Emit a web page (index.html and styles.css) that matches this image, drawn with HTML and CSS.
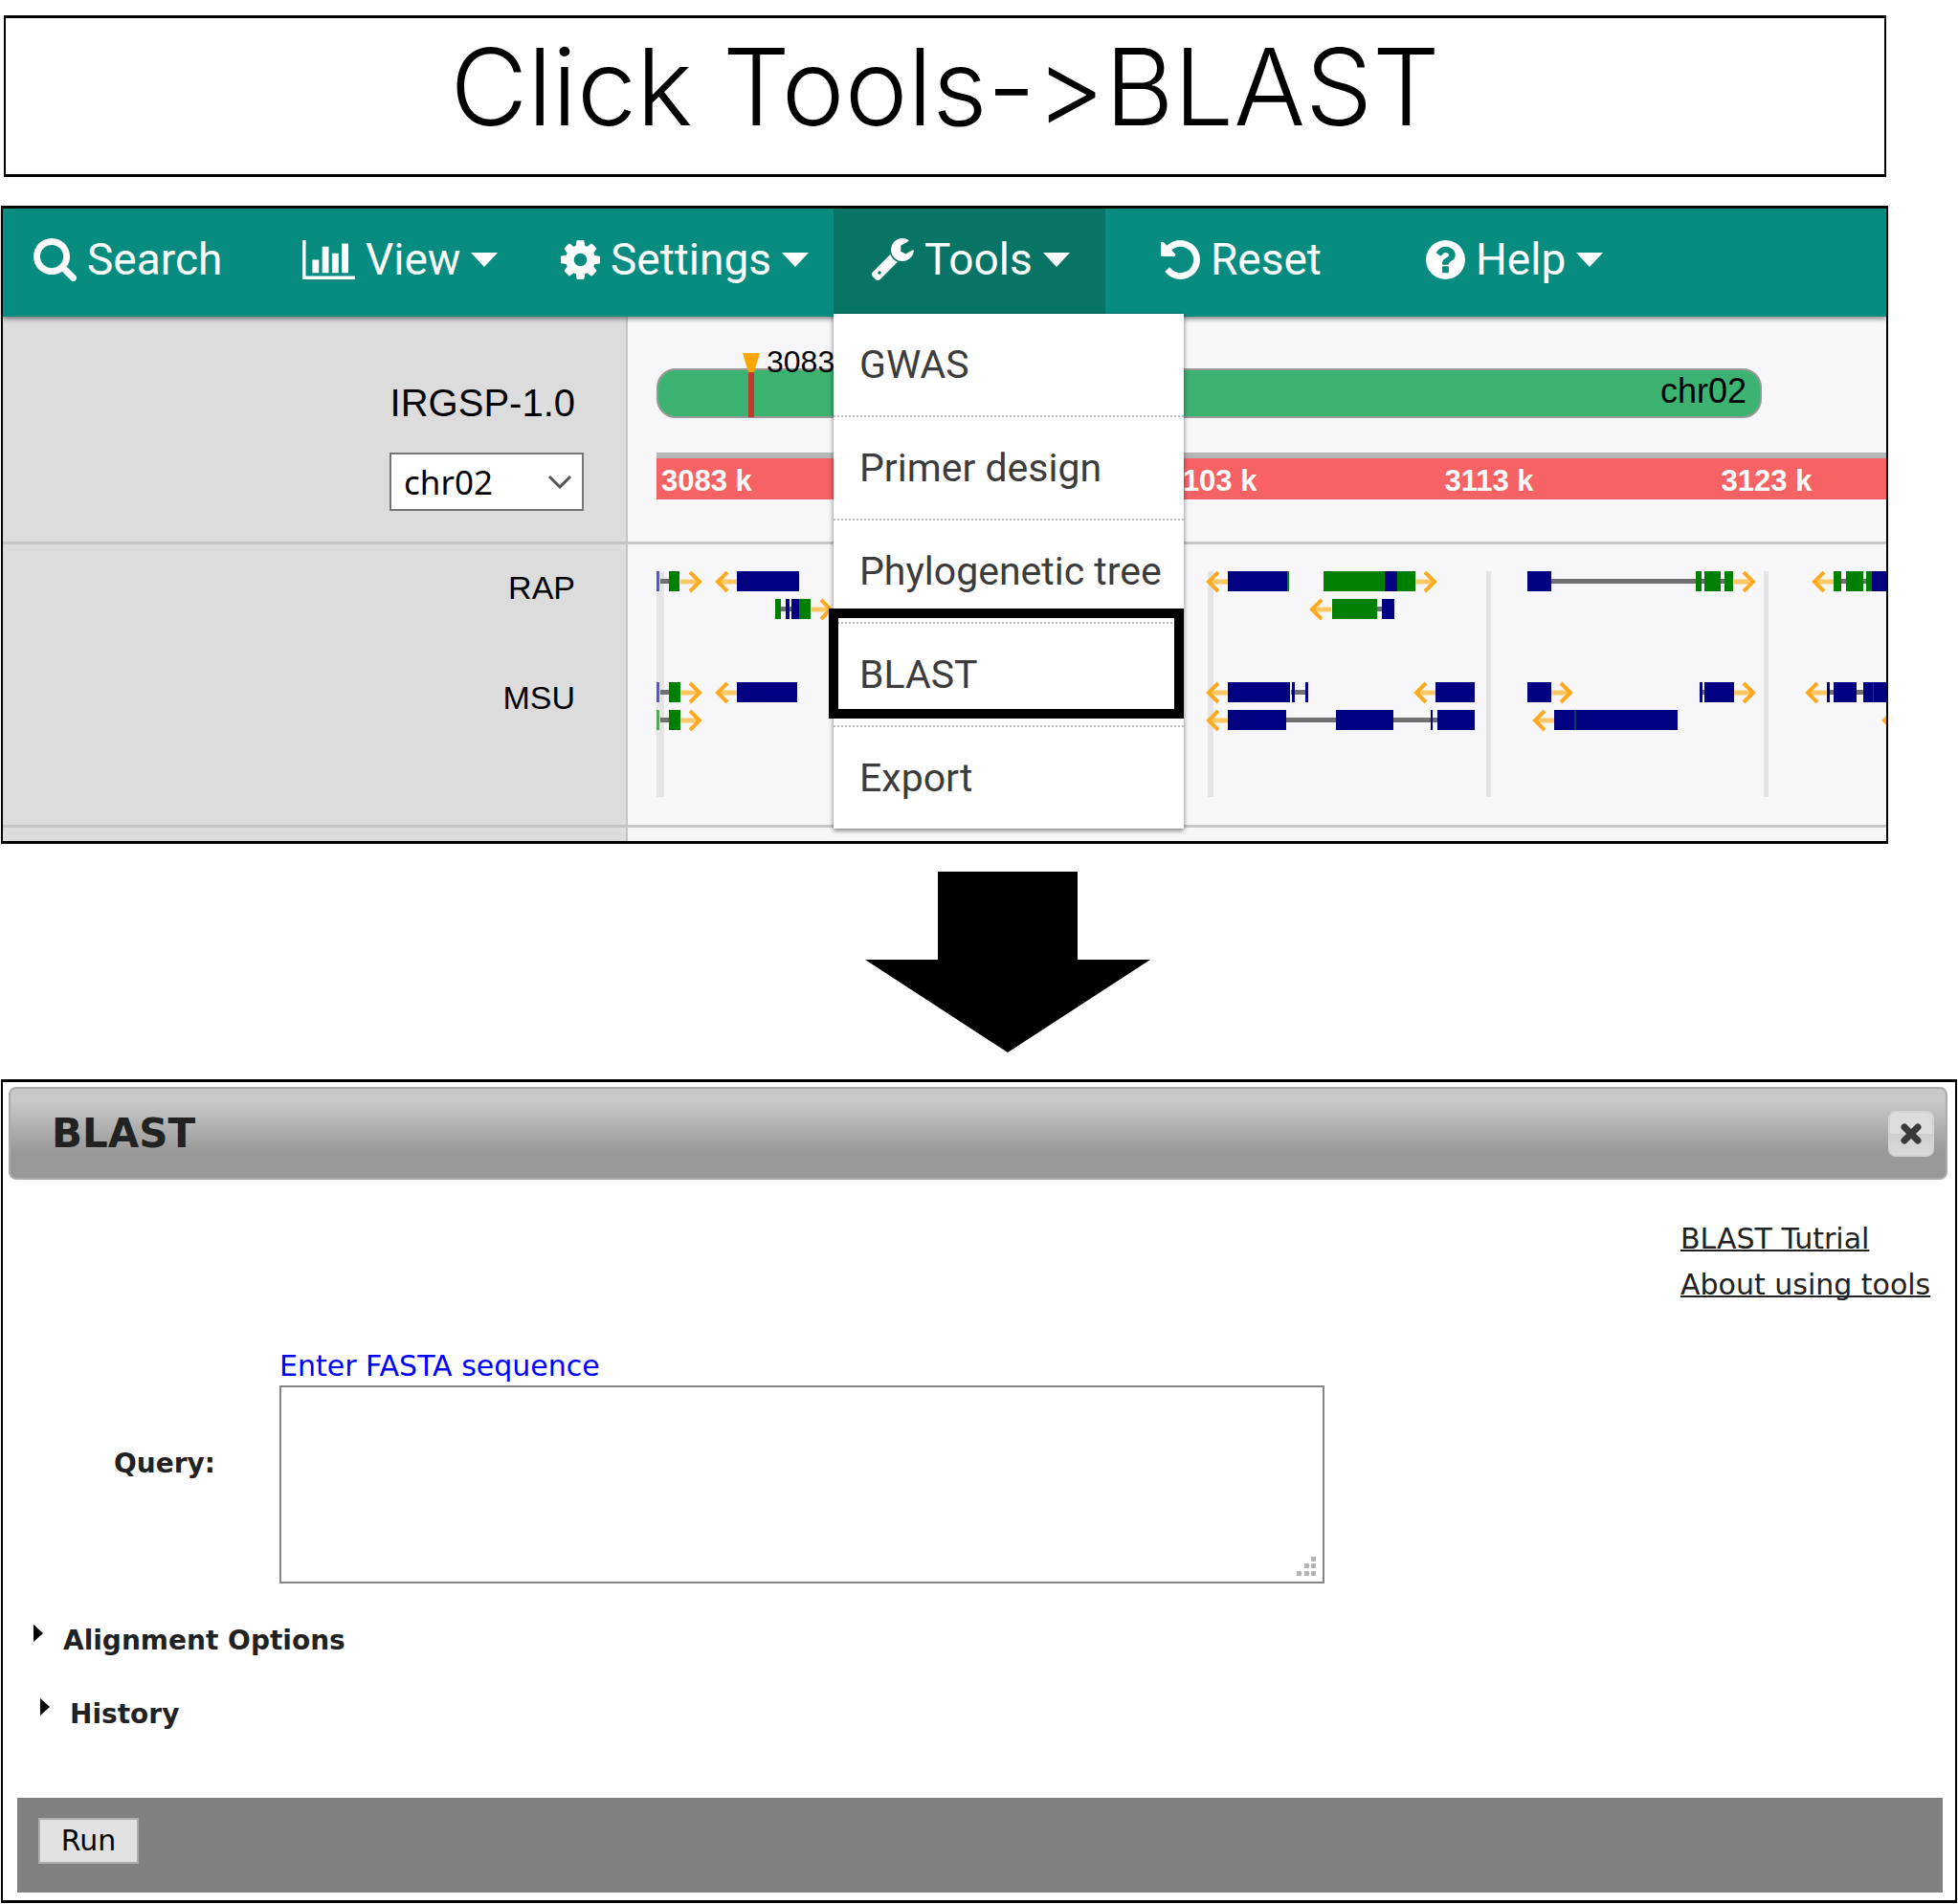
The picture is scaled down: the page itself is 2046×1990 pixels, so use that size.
FILE: index.html
```html
<!DOCTYPE html>
<html lang="en">
<head>
    <meta charset="UTF-8">
    <title>BLAST</title>
    <link rel="stylesheet" href="styles.css">
</head>
<body>

<h1 class="title">Click Tools-&gt;BLAST</h1>

<div class="browser">
    <ul class="nav">
        <li class="search">
            <button type="button">
                <svg width="45" height="45" viewBox="64 128 1664 1664"><path d="M1216 832q0-185-131.5-316.5t-316.5-131.5-316.5 131.5-131.5 316.5 131.5 316.5 316.5 131.5 316.5-131.5 131.5-316.5zm512 832q0 52-38 90t-90 38q-54 0-90-38l-343-342q-179 124-399 124-143 0-273.5-55.5t-225-150-150-225-55.5-273.5 55.5-273.5 150-225 225-150 273.5-55.5 273.5 55.5 225 150 150 225 55.5 273.5q0 220-124 399l343 343q37 37 37 90z"/></svg>
                Search
            </button>
        </li>
        <li>
            <button type="button">
                <svg width="55" height="41" viewBox="0 128 2048 1536"><path d="M640 896v512h-256v-512h256zm384-512v1024h-256v-1024h256zm1024 1152v128h-2048v-1536h128v1408h1920zm-640-896v768h-256v-768h256zm384-384v1152h-256v-1152h256z"/></svg>
                View
                <i class="caret"></i>
            </button>
        </li>
        <li>
            <button type="button">
                <svg width="41" height="41" viewBox="128 128 1536 1536"><path d="M1152 896q0-106-75-181t-181-75-181 75-75 181 75 181 181 75 181-75 75-181zm512-109v222q0 12-8 23t-20 13l-185 28q-19 54-39 91 35 50 107 138 10 12 10 25t-9 23q-27 37-99 108t-94 71q-12 0-26-9l-138-108q-44 23-91 38-16 136-29 186-7 28-36 28h-222q-14 0-24.5-8.5t-11.5-21.5l-28-184q-49-16-90-37l-141 107q-10 9-25 9-14 0-25-11-126-114-165-168-7-10-7-23 0-12 8-23 15-21 51-66.5t54-70.5q-27-50-41-99l-183-27q-13-2-21-12.5t-8-23.5v-222q0-12 8-23t19-13l186-28q14-46 39-92-40-57-107-138-10-12-10-24 0-10 9-23 26-36 98.5-107.5t94.5-71.5q13 0 26 10l138 107q44-23 91-38 16-136 29-186 7-28 36-28h222q14 0 24.5 8.5t11.5 21.5l28 184q49 16 90 37l142-107q9-9 24-9 13 0 25 10 129 119 165 170 7 8 7 22 0 12-8 23-15 21-51 66.5t-54 70.5q26 50 41 98l183 28q13 2 21 12.5t8 23.5z"/></svg>
                Settings
                <i class="caret"></i>
            </button>
        </li>
        <li class="active">
            <button type="button">
                <svg width="44" height="44" viewBox="85 128 1643 1643"><path d="M448 1472q0-26-19-45t-45-19-45 19-19 45 19 45 45 19 45-19 19-45zm644-420l-682 682q-37 37-90 37-52 0-91-37l-106-108q-38-36-38-90 0-53 38-91l681-681q39 98 114.5 173.5t173.5 114.5zm634-435q0 39-23 106-47 134-164.5 217.5t-258.5 83.5q-185 0-316.5-131.5t-131.5-316.5 131.5-316.5 316.5-131.5q58 0 121.5 16.5t107.5 46.5q16 11 16 28t-16 28l-293 169v224l193 107q5-3 79-48.5t135.5-81 70.5-35.5q15 0 23.5 10t8.5 25z"/></svg>
                Tools
                <i class="caret"></i>
            </button>
            <ul class="menu">
                <li><a href="#">GWAS</a></li>
                <li><a href="#">Primer design</a></li>
                <li><a href="#">Phylogenetic tree</a></li>
                <li class="marked"><a href="#">BLAST</a></li>
                <li><a href="#">Export</a></li>
            </ul>
        </li>
        <li class="reset">
            <button type="button">
                <svg width="41" height="41" viewBox="128 128 1536 1536"><path d="M1664 896q0 156-61 298t-164 245-245 164-298 61q-172 0-327-72.5t-264-204.5q-7-10-6.5-22.5t8.5-20.5l137-138q10-9 25-9 16 2 23 12 73 95 179 147t225 52q104 0 198.5-40.5t163.5-109.5 109.5-163.5 40.5-198.5-40.5-198.5-109.5-163.5-163.5-109.5-198.5-40.5q-98 0-188 35.5t-160 101.5l137 138q31 30 14 69-17 40-59 40h-448q-26 0-45-19t-19-45v-448q0-42 40-59 39-17 69 14l130 129q107-101 244.5-156.5t284.5-55.5q156 0 298 61t245 164 164 245 61 298z"/></svg>
                Reset
            </button>
        </li>
        <li>
            <button type="button">
                <svg width="41" height="41" viewBox="128 128 1536 1536"><path d="M1024 1376v-192q0-14-9-23t-23-9h-192q-14 0-23 9t-9 23v192q0 14 9 23t23 9h192q14 0 23-9t9-23zm256-672q0-88-55.5-163t-138.5-116-170-41q-243 0-371 213-15 24 8 42l132 100q7 6 19 6 16 0 25-12 53-68 86-92 34-24 86-24 48 0 85.5 26t37.5 59q0 38-20 61t-68 45q-63 28-115.5 86.5t-52.5 125.5v36q0 14 9 23t23 9h192q14 0 23-9t9-23q0-19 21.5-49.5t54.5-49.5q32-18 49-28.5t46-35 44.5-48 28-60.5 12.5-81zm384 192q0 209-103 385.5t-279.5 279.5-385.5 103-385.5-103-279.5-279.5-103-385.5 103-385.5 279.5-279.5 385.5-103 385.5 103 279.5 279.5 103 385.5z"/></svg>
                Help
                <i class="caret"></i>
            </button>
        </li>
    </ul>

    <div class="row position">
        <div class="side">
            <label for="chr">IRGSP-1.0</label>
            <div class="select">
                <select id="chr">
                    <option>chr02</option>
                </select>
                <svg width="26" height="16" viewBox="0 0 26 16"><path d="M2 2l11 11L24 2" fill="none" stroke="#555" stroke-width="3"/></svg>
            </div>
        </div>
        <div class="view">
            <div class="chromosome">
                <svg class="marker" width="18" height="67" viewBox="0 0 18 67">
                    <path d="M6 18h6v49H6z" fill="#c0392b"/>
                    <path d="M0 0h18l-6 20H6z" fill="#ffa500"/>
                </svg>
                <span class="pos">3083</span>
                <span>chr02</span>
            </div>
            <div class="ruler">
                <span>3083 k</span>
                <span></span>
                <span>3103 k</span>
                <span>3113 k</span>
                <span>3123 k</span>
            </div>
        </div>
    </div>

    <div class="row genes">
        <div class="side">
            <span>RAP</span>
            <span>MSU</span>
        </div>
        <div class="view">
            <svg class="track" width="100%" height="240">
                <defs>
                    <g id="right">
                        <path d="M0 11h18" stroke="#ffc864" stroke-width="5"/>
                        <path d="M10 1l10 10-10 10" fill="none" stroke="#ffa920" stroke-width="4"/>
                    </g>
                    <g id="left">
                        <path d="M3 11h18" stroke="#ffc864" stroke-width="5"/>
                        <path d="M11 1L1 11l10 10" fill="none" stroke="#ffa920" stroke-width="4"/>
                    </g>
                </defs>
                <!-- grid -->
                <path class="grid" d="M0 0h8v236H0zM576 0h6v236h-6zM867 0h5v236h-5zM1157 0h5v236h-5z"/>
                <!-- introns -->
                <path class="intron" d="M4 8h10v5H4zM130 37h12v5h-12zM935 8h151v5H935zM1086 8h38v5h-38zM1232 8h36v5h-36zM753 37h6v5h-6z
                    M4 124h10v5H4zM663 124h16v5h-16zM1091 124h6v5h-6zM1224 124h38v5h-38z
                    M4 153h10v5H4zM657 153h54v5h-54zM769 153h48v5h-48z"/>
                <!-- coding -->
                <path class="cds" d="M84 0h65v21H84zM135 29h4v21h-4zM141 29h9v21h-9zM597 0h62v21h-62zM910 0h25v21h-25zM758 29h13v21h-13zM1269 0h40v21h-40z
                    M84 116h63v21H84zM597 116h65v21h-65zM664 116h3v21h-3zM678 116h3v21h-3zM814 116h41v21h-41zM910 116h25v21h-25zM1090 116h3v21h-3zM1095 116h31v21h-31zM1223 116h3v21h-3zM1230 116h24v21h-24zM1261 116h60v21h-60z
                    M597 145h61v21h-61zM710 145h60v21h-60zM809 145h2v21h-2zM816 145h39v21h-39zM938 145h129v21H938z"/>
                <!-- utr -->
                <path class="utr" d="M13 0h11v21H13zM124 29h6v21h-6zM149 29h12v21h-12zM659 0h2v21h-2zM697 0h64v21h-64zM774 0h19v21h-19zM706 29h47v21h-47zM1086 0h6v21h-6zM1095 0h17v21h-17zM1116 0h9v21h-9zM1230 0h8v21h-8zM1243 0h18v21h-18zM1264 0h6v21h-6z
                    M13 116h12v21H13zM13 145h12v21H13z"/>
                <path class="cds" d="M761 0h13v21h-13z"/>
                <path class="cds" opacity=".6" d="M0 0h3v21H0zM0 116h3v21H0z"/>
                <path class="utr" opacity=".6" d="M0 145h3v21H0z"/>
                <path fill="#133a5c" d="M959 145h2v21h-2zM1271 116h1v21h-1z"/>
                <use href="#right" x="25"/>
                <use href="#left" x="63"/>
                <use href="#right" x="162" y="29"/>
                <use href="#right" x="25" y="116"/>
                <use href="#left" x="63" y="116"/>
                <use href="#right" x="25" y="145"/>
                <use href="#left" x="576"/>
                <use href="#right" x="793"/>
                <use href="#left" x="684" y="29"/>
                <use href="#right" x="1126"/>
                <use href="#left" x="1209"/>
                <use href="#left" x="576" y="116"/>
                <use href="#left" x="793" y="116"/>
                <use href="#right" x="935" y="116"/>
                <use href="#right" x="1126" y="116"/>
                <use href="#left" x="1202" y="116"/>
                <use href="#left" x="576" y="145"/>
                <use href="#left" x="917" y="145"/>
                <use href="#left" x="1282" y="145"/>
            </svg>
        </div>
    </div>

    <div class="row next">
        <div class="side"></div>
        <div class="view"></div>
    </div>
</div>

<svg class="arrow" width="298" height="190" viewBox="0 0 298 190"><path d="M76 0h146v92h76l-149 97L0 92h76z"/></svg>

<form class="dialog">
    <div class="dialog-head">
        <h2>BLAST</h2>
        <button type="button" class="close" aria-label="Close">
            <svg width="24" height="24" viewBox="0 0 24 24"><path d="M5 5l14 14M19 5L5 19" stroke="#3a3a3a" stroke-width="7" stroke-linecap="round"/></svg>
        </button>
    </div>
    <div class="links">
        <a href="#">BLAST Tutrial</a>
        <a href="#">About using tools</a>
    </div>
    <div class="query">
        <p>Enter FASTA sequence</p>
        <label for="query">Query:</label>
        <div class="area">
            <textarea id="query"></textarea>
            <svg width="20" height="20" viewBox="0 0 20 20"><path d="M15 0h5v5h-5zM8 7h5v5H8zM15 7h5v5h-5zM0 15h5v5H0zM8 15h5v5H8zM15 15h5v5h-5z" fill="#b4b4b4"/></svg>
        </div>
    </div>
    <details>
        <summary>Alignment Options</summary>
    </details>
    <details class="history">
        <summary>History</summary>
    </details>
    <div class="dialog-foot">
        <button type="button" class="run">Run</button>
    </div>
</form>

</body>
</html>
```
FILE: styles.css
```css
* {
    margin: 0;
    padding: 0;
    box-sizing: border-box;
}

body {
    padding: 16px 1px 1px 1px;
    background-color: #fff;
    color: #000;
    font-family: "Liberation Sans", Arial, sans-serif;
}

ul {
    list-style: none;
}

button {
    border: none;
    background: none;
    cursor: pointer;
}

.title {
    margin: 0 74px 30px 3px;
    padding-bottom: 19px;
    border: 3px solid #000;
    border-width: 3px 2px;
    font-family: Inter, sans-serif;
    font-size: 111px;
    font-weight: 300;
    font-feature-settings: "calt" 0;
    line-height: 144px;
    text-align: center;
}

/* genome browser */
.browser {
    margin-right: 72px;
    border: 3px solid #000;
    border-width: 3px 2px;
}

.nav {
    position: relative;
    z-index: 1;
    display: grid;
    grid-template-columns: 273px 270px 325px 284px 295px 1fr;
    height: 113px;
    background-color: #088c7f;
    box-shadow: 0 2px 5px rgba(0, 0, 0, 0.5);
}

.nav button {
    display: flex;
    align-items: center;
    gap: 11px;
    width: 100%;
    height: 106px;
    padding-left: 40px;
    color: #fff;
    font-family: Roboto, sans-serif;
    font-size: 46px;
}

.nav .search button {
    padding-left: 32px;
}

.nav .reset button {
    padding-left: 58px;
}

.nav svg {
    fill: #fff;
}

.caret {
    border: 14px solid transparent;
    border-top: 15px solid #fff;
    border-bottom: none;
}

.active {
    position: relative;
    height: 110px;
    background-color: #077466;
}

.menu {
    position: absolute;
    top: 110px;
    left: 0;
    width: 366px;
    background-color: #fff;
    box-shadow: 0 2px 5px rgba(0, 0, 0, 0.5);
}

.menu li {
    position: relative;
    border-bottom: 2px dotted #bbb;
}

.menu li:last-child {
    border-bottom: none;
}

.menu a {
    display: block;
    padding-left: 27px;
    color: #3c3c3c;
    font-family: Roboto, sans-serif;
    font-size: 41px;
    line-height: 106px;
    text-decoration: none;
}

.marked::after {
    content: "";
    position: absolute;
    top: -16px;
    right: 0;
    bottom: 7px;
    left: -5px;
    border: 10px solid #000;
}

.row {
    display: grid;
    grid-template-columns: 653px 1fr;
    border-bottom: 3px solid #c6c6c6;
}

.side {
    display: flex;
    flex-direction: column;
    align-items: flex-end;
    border-right: 2px solid #c4c4c4;
    background-color: #dcdcdc;
}

.view {
    min-width: 0;
    padding-left: 30px;
    background-color: #f7f7fa;
    overflow: hidden;
}

.position .side {
    gap: 29px;
    padding: 67px 44px 32px 0;
}

.position label {
    padding-right: 9px;
    font-size: 40px;
    line-height: 46px;
}

.select {
    position: relative;
}

.select select {
    width: 203px;
    height: 61px;
    padding-left: 13px;
    border: 2px solid #767676;
    background-color: #fff;
    appearance: none;
    font-family: "Noto Sans", sans-serif;
    font-size: 35px;
}

.select svg {
    position: absolute;
    top: 23px;
    right: 12px;
}

.chromosome {
    position: relative;
    display: flex;
    align-items: center;
    justify-content: flex-end;
    height: 52px;
    margin: 54px 130px 36px 0;
    padding: 0 14px 4px 0;
    border: 2px solid #999;
    border-radius: 20px;
    background-color: #3cb371;
    font-size: 36px;
}

.marker {
    position: absolute;
    top: -18px;
    left: 88px;
}

.pos {
    position: absolute;
    top: -27px;
    left: 113px;
    font-size: 32px;
}

.ruler {
    display: flex;
    height: 49px;
    border-top: 6px solid #b4b7b7;
    background-color: #f76364;
    color: #fff;
    font-size: 31px;
    font-weight: bold;
    line-height: 47px;
    text-align: center;
    overflow: hidden;
}

.ruler span {
    flex: 0 0 290px;
}

.ruler span:first-child {
    flex-basis: 145px;
    padding-left: 5px;
    text-align: left;
}

.genes .side {
    gap: 77px;
    padding: 26px 53px 114px 0;
    font-size: 34px;
    line-height: 38px;
}

.genes .view {
    padding-top: 28px;
}

.next {
    height: 14px;
    border-bottom: none;
}

.track {
    display: block;
}

.grid {
    fill: #e4e4e4;
}

.intron {
    fill: #707070;
}

.cds {
    fill: #000080;
}

.utr {
    fill: #008000;
}

.arrow {
    display: block;
    margin: 29px 0 27px 903px;
}

/* blast dialog */
.dialog {
    padding: 5px 8px 8px 6px;
    border: 3px solid #000;
    border-width: 3px 2px;
    color: #222;
    font-family: "DejaVu Sans", Verdana, sans-serif;
    font-size: 30px;
}

.dialog-head {
    display: flex;
    align-items: center;
    justify-content: space-between;
    height: 97px;
    padding: 0 12px 0 43px;
    border: 2px solid #aaa;
    border-radius: 8px;
    background: linear-gradient(#c8c8c8 15%, #999 70%);
}

.dialog-head h2 {
    font-size: 42px;
}

.close {
    display: flex;
    align-items: center;
    justify-content: center;
    width: 48px;
    height: 48px;
    border: 2px solid #d3d3d3;
    border-radius: 8px;
    background: linear-gradient(#dcdcdc 50%, #cfcfcf 50%, #dadada);
}

.links {
    display: flex;
    flex-direction: column;
    align-items: flex-start;
    width: 262px;
    margin: 38px 17px 41px auto;
    line-height: 48px;
    white-space: nowrap;
}

.links a {
    color: #222;
    text-decoration-thickness: 2px;
    text-decoration-skip-ink: none;
}

.query {
    display: grid;
    grid-template-columns: 283px 1092px;
    align-items: center;
}

.query p {
    grid-column: 2;
    color: #00f;
    line-height: 40px;
}

.query label {
    grid-column: 1;
    grid-row: 1 / 3;
    padding: 0 0 4px 110px;
    font-size: 28px;
    font-weight: bold;
}

.area {
    position: relative;
    grid-column: 2;
}

.area textarea {
    display: block;
    width: 100%;
    height: 207px;
    padding: 8px;
    border: 2px solid #858585;
    background-color: #fff;
    font: inherit;
    resize: none;
}

.area svg {
    position: absolute;
    right: 9px;
    bottom: 8px;
}

details {
    margin: 43px 0 0 26px;
    font-size: 28px;
    font-weight: bold;
    line-height: 34px;
}

details.history {
    margin-left: 33px;
}

summary {
    display: flex;
    gap: 21px;
    cursor: pointer;
}

summary::before {
    content: "";
    height: 0;
    border: 9px solid transparent;
    border-left: 10px solid #000;
    border-right: none;
}

.dialog-foot {
    margin: 70px 5px 0 9px;
    padding: 21px 22px 30px;
    background-color: #808080;
}

.run {
    display: block;
    width: 105px;
    height: 48px;
    border: 2px solid #adadad;
    background-color: #e1e1e1;
    color: #000;
    font: inherit;
    line-height: 44px;
}
```
